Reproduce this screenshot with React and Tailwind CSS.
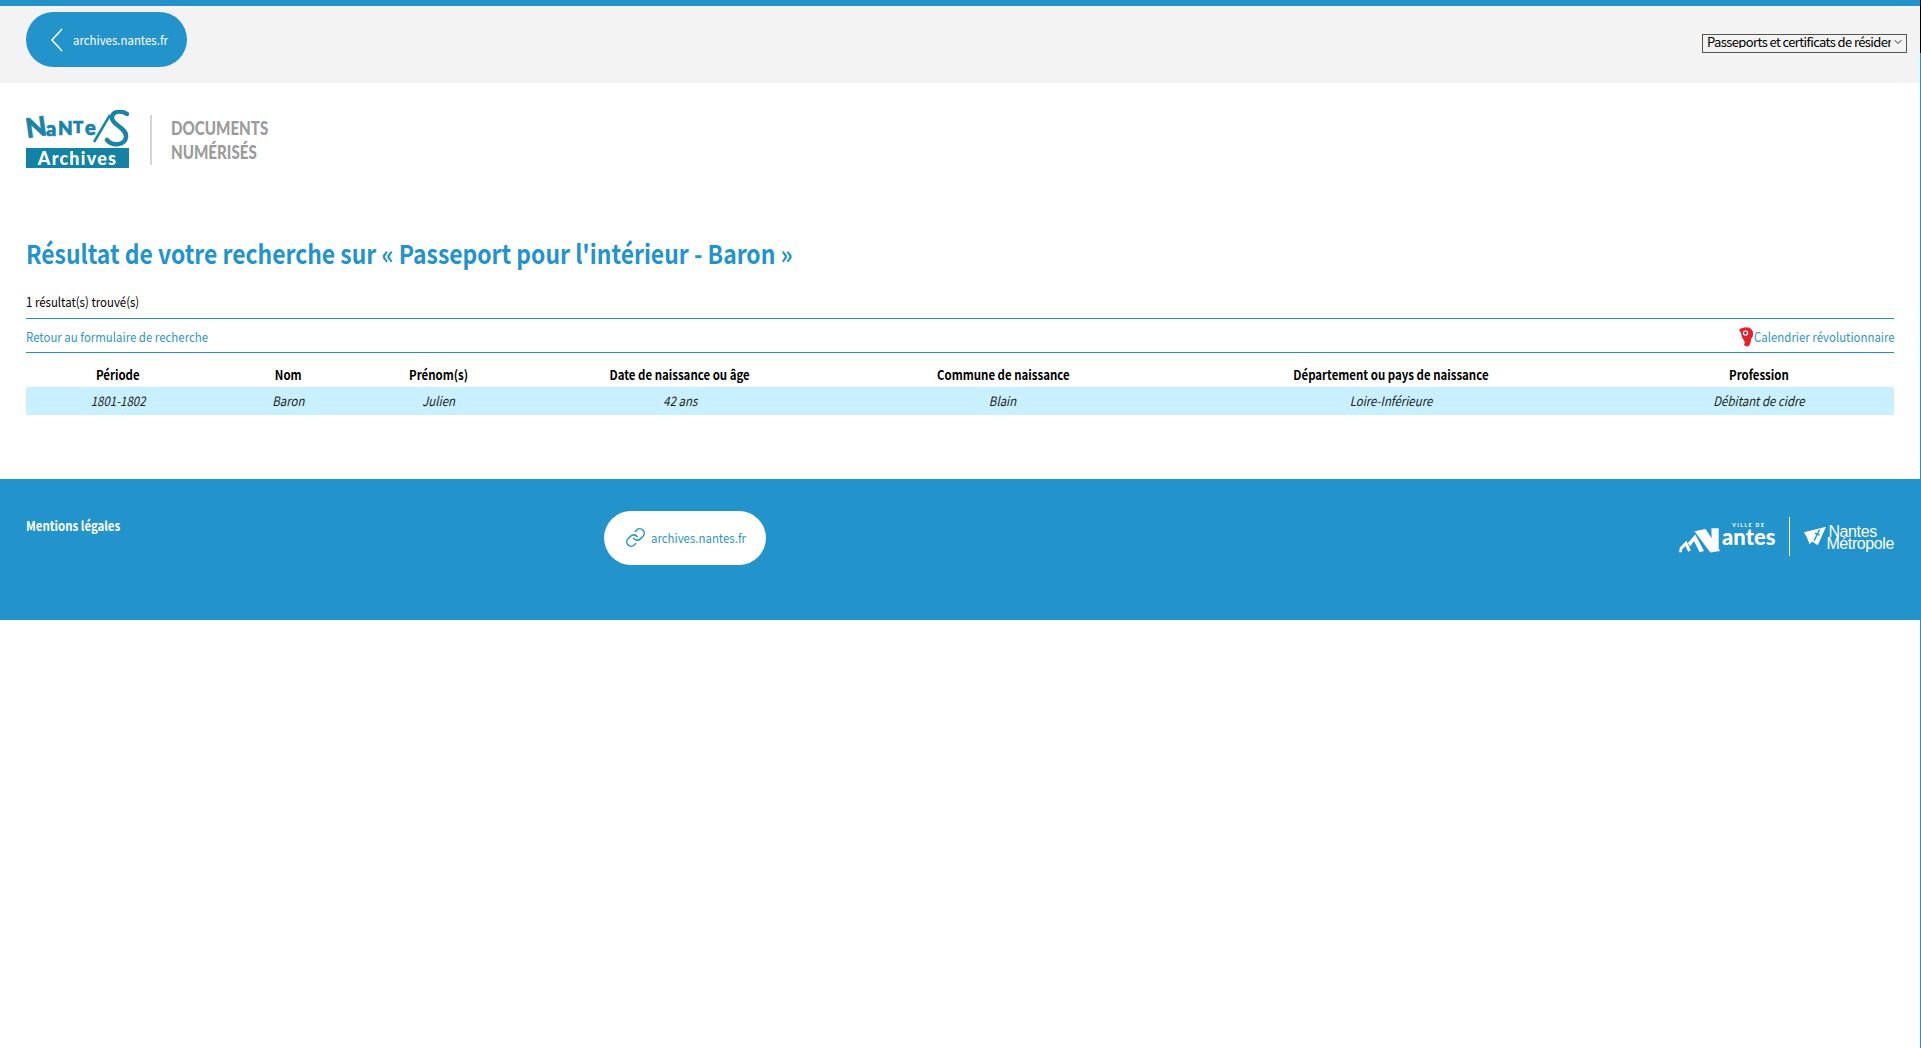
import React from "react";
import { Link, ChevronDown } from "lucide-react";

const sans = "font-['Noto_Sans_CJK_SC','Source_Sans_Pro',sans-serif]";

const columns = [
  { label: "Période", value: "1801-1802", width: "w-[184px]" },
  { label: "Nom", value: "Baron", width: "w-[156px]" },
  { label: "Prénom(s)", value: "Julien", width: "w-[146px]" },
  { label: "Date de naissance ou âge", value: "42 ans", width: "w-[336px]" },
  { label: "Commune de naissance", value: "Blain", width: "w-[310px]" },
  { label: "Département ou pays de naissance", value: "Loire-Inférieure", width: "w-[466px]" },
  { label: "Profession", value: "Débitant de cidre", width: "w-[270px]" },
];

// the reference font runs narrower than any installed one
const Narrow = ({ children, className = "origin-left" }) => (
  <span className={`inline-block scale-x-[0.88] whitespace-nowrap ${className}`}>{children}</span>
);

// Nantes Archives logo, lettering stays real text
const ArchivesLogo = () => (
  <div className="flex w-[103px] flex-col self-start">
    <svg viewBox="0 0 103 38" className="h-[38px] w-[103px]">
      <g fill="#1a84a8" stroke="#1a84a8" strokeWidth="0.7" fontFamily="Lato, sans-serif" fontWeight="900">
        <text x="1" y="28" fontSize="27" transform="rotate(-8 1 28)">N</text>
        <text x="20" y="26" fontSize="20">a</text>
        <text x="32" y="25" fontSize="19">N</text>
        <text x="47" y="23" fontSize="17">T</text>
        <text x="59" y="25" fontSize="20">e</text>
      </g>
      <path d="M68 32L84 5" fill="none" stroke="#1a84a8" strokeWidth="2.5" />
      <path d="M101 4c-6-4-15-3-15 4 0 7 15 10 14 19-1 8-13 10-19 3" fill="none" stroke="#1a84a8" strokeWidth="4.5" strokeLinecap="round" />
    </svg>
    <div className="flex h-[20px] items-center justify-center bg-[#1282a5] font-['Lato',sans-serif] text-[18px] font-black leading-none tracking-[1.2px] text-white">
      Archives
    </div>
  </div>
);

const CapIcon = () => (
  <svg viewBox="0 0 16 20" className="h-[20px] w-[16px]">
    <path d="M1 3C4 0 11-1 14 3c2 3 1 7-1 9 0 3-1 5-2 7-2 1-4 0-5-1 1-2 1-4-1-6C3 9 4 6 1 3z" fill="#e8202a" />
    <circle cx="7.5" cy="6" r="2.6" fill="#fff" />
    <circle cx="7.5" cy="6" r="1.4" fill="#24478f" />
  </svg>
);

const VilleLogo = () => (
  <div className="flex h-[38px] items-end">
    <svg viewBox="15 35 120 75" className="h-[28px] w-[44px]" fill="#fff">
      <path d="M18 103L20 90 38 72 50 98 43 102 35 86 26 96 26 103Z" />
      <path d="M42 78L62 55 86 100 74 103 59 73 48 87Z" />
      <path d="M60 46L90 40 130 100 103 104Z" />
      <path d="M106 38H126V100H108Z" />
    </svg>
    <div className="mb-[10px] flex flex-col items-center">
      <span className="font-['Lato',sans-serif] text-[5px] font-black leading-[6px] tracking-[1.5px] text-white">VILLE DE</span>
      <span className="font-['Lato',sans-serif] text-[22px] font-black leading-[17px] text-white">antes</span>
    </div>
  </div>
);

const MetropoleLogo = () => (
  <div className="flex items-start">
    <svg viewBox="0 0 24 20" className="h-[20px] w-[22px]">
      <path d="M0 6L24 0 15 20 9 16 6 19 3 11z" fill="#fff" />
      <path d="M17 3L11 15M12 7L17 9" stroke="#2393cc" strokeWidth="1.5" fill="none" />
    </svg>
    <div className="flex flex-col font-['Liberation_Sans',sans-serif] text-[16px] leading-[12px] tracking-[-0.4px] text-white">
      <span className="ml-[2px]">Nantes</span>
      <span>Métropole</span>
    </div>
  </div>
);

export default function App() {
  return (
    <div className={`${sans} relative flex min-h-[1048px] flex-col border-r border-[#2393cc] bg-white text-[13px] text-black`}>
      <div className="absolute -right-px top-0 h-[53px] w-px bg-black" />
      <header className="flex h-[83px] items-start justify-between border-t-[6px] border-[#2292c9] bg-[#f3f3f3] pl-[26px] pr-[13px]">
        <a className="mt-[6px] flex h-[55px] w-[161px] items-center rounded-[28px] bg-[#2393cc] pl-[24px] leading-[20px] text-white">
          <svg viewBox="0 0 14 24" className="mr-[9px] h-[24px] w-[14px] shrink-0" fill="none" stroke="#fff" strokeWidth="1.5">
            <path d="M12 1L2 12l10 11" />
          </svg>
          <Narrow>archives.nantes.fr</Narrow>
        </a>
        <div className="relative mt-[26px] h-[19px] w-[205px]">
          <select className="h-[19px] w-full appearance-none border border-[#555] bg-[#f3f3f3] pb-[3px] pl-[4px] pr-[15px] pt-0 text-[13px] leading-none tracking-[-0.6px] text-black">
            <option>Passeports et certificats de résidence</option>
          </select>
          <ChevronDown size={12} strokeWidth={2} className="absolute right-[3px] top-[4px] text-[#333]" />
        </div>
      </header>

      <main className="flex flex-col px-[26px]">
        <div className="mt-[27px] flex h-[60px] items-center">
          <ArchivesLogo />
          <div className="ml-[21px] h-[50px] w-[2px] bg-[#d5d5d5]" />
          <div className="ml-[19px] flex flex-col font-['Lato',sans-serif] text-[18px] font-black leading-[24px] text-[#9b9b9b]">
            <span className="origin-left scale-x-[0.84]">DOCUMENTS</span>
            <span className="origin-left scale-x-[0.84]">NUMÉRISÉS</span>
          </div>
        </div>

        <h1 className="mt-[63px] origin-left scale-x-[0.88] whitespace-nowrap text-[26px] font-bold leading-[40px] text-[#2393cc]">
          Résultat de votre recherche sur « Passeport pour l'intérieur - Baron »
        </h1>

        <p className="mt-[19px] h-[26px] leading-[20px]">
          <Narrow>1 résultat(s) trouvé(s)</Narrow>
        </p>

        <div className="flex h-[35px] items-center justify-between border-y border-[#2a8fb8] pt-[2px] text-[#2f96c8]">
          <a>
            <Narrow>Retour au formulaire de recherche</Narrow>
          </a>
          <a className="flex items-center">
            <CapIcon />
            <span className="w-[140px]">
              <Narrow>Calendrier révolutionnaire</Narrow>
            </span>
          </a>
        </div>

        <table className="mt-[12px] w-full table-fixed border-collapse">
          <thead>
            <tr className="h-[22px]">
              {columns.map((col) => (
                <th key={col.label} className={`${col.width} p-0 pb-[2px] text-center font-bold leading-[20px]`}>
                  <Narrow className="origin-center">{col.label}</Narrow>
                </th>
              ))}
            </tr>
          </thead>
          <tbody>
            <tr className="h-[28px] bg-[#c9f0fe]">
              {columns.map((col) => (
                <td key={col.label} className="p-0 text-center italic leading-[20px] text-[#222]">
                  <Narrow className="origin-center">{col.value}</Narrow>
                </td>
              ))}
            </tr>
          </tbody>
        </table>
      </main>

      <footer className="mt-[64px] flex h-[141px] items-start bg-[#2393cc] px-[26px] text-white">
        <a className="mt-[37px] w-[578px] font-bold leading-[20px]">
          <Narrow>Mentions légales</Narrow>
        </a>
        <a className="mt-[32px] flex h-[54px] w-[162px] items-center rounded-[27px] bg-white pb-[1px] pl-[21px] text-[#2f96c8]">
          <Link size={21} strokeWidth={1.75} className="mr-[5px] shrink-0" />
          <Narrow>archives.nantes.fr</Narrow>
        </a>
        <div className="ml-auto mt-[38px] flex items-start">
          <VilleLogo />
          <div className="mx-[14px] h-[39px] w-px bg-white" />
          <div className="mt-[9px]">
            <MetropoleLogo />
          </div>
        </div>
      </footer>
    </div>
  );
}
